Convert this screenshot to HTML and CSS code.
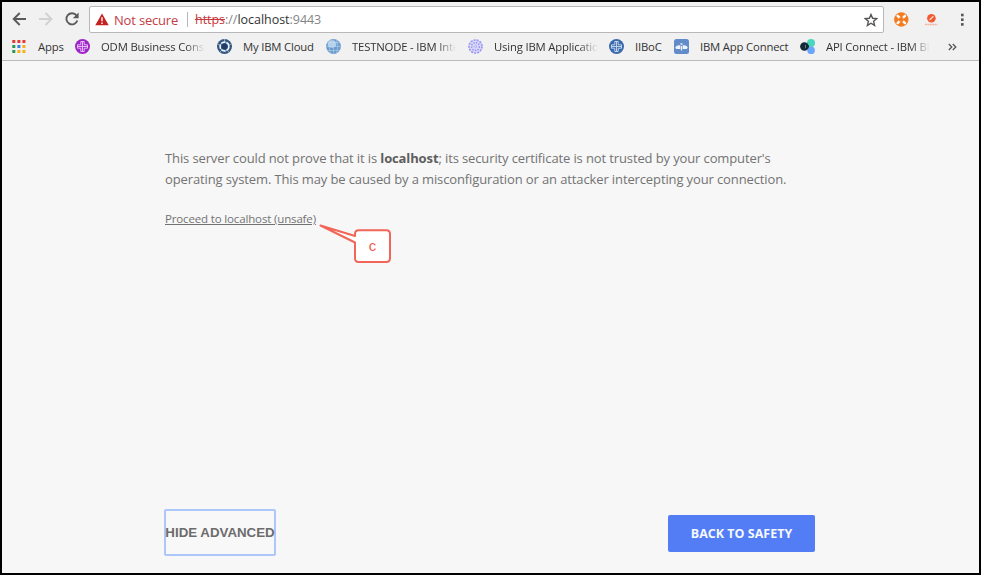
FILE: index.html
```
<!DOCTYPE html>
<html lang="en">
<head>
<meta charset="utf-8">
<title>Privacy error</title>
<link rel="stylesheet" href="styles.css">
</head>
<body>
<div class="window">
  <header class="chrome">
    <div class="toolbar">
      <svg class="nav" width="80" height="28" viewBox="0 0 80 28" fill="none" stroke-width="1.9">
        <path d="M24 14H12M17.7 8L11.7 14L17.7 20" stroke="#5a5a5a"/>
        <path d="M37 14H49M43.5 8L49.5 14L43.5 20" stroke="#d2d2d2"/>
        <path d="M74.5 10.5A5.6 5.6 0 1 0 75.3 15.5" stroke="#5a5a5a"/>
        <path d="M76.6 7.5V13.3H70.8Z" fill="#5a5a5a"/>
      </svg>
      <div class="address">
        <svg class="warning" width="14" height="13" viewBox="0 0 14 13"><path d="M7 .5L13.7 12.2H.3Z" fill="#c5221f"/><path d="M7 4.2V8.3M7 9.4V11" stroke="#fff" stroke-width="1.4"/></svg>
        <span class="insecure">Not secure</span>
        <span class="divider"></span>
        <span class="url"><s>https</s>://<b>localhost</b>:9443</span>
        <svg class="star" width="14" height="14" viewBox="0 0 14 14" fill="none" stroke="#555" stroke-width="1.4"><path d="M7 1.5L8.6 5.3L12.8 5.6L9.6 8.3L10.6 12.4L7 10.2L3.4 12.4L4.4 8.3L1.2 5.6L5.4 5.3Z"/></svg>
      </div>
      <svg class="extensions" width="94" height="28" viewBox="0 0 94 28">
        <circle cx="17.3" cy="13.5" r="7.2" fill="#f47b20"/>
        <path d="M13.6 9.8L21 17.2M21 9.8L13.6 17.2" stroke="#fff" stroke-width="2.4" stroke-linecap="round"/><circle cx="17.3" cy="13.5" r="2.5" fill="#f47b20"/>
        <circle cx="47.4" cy="12.3" r="4.3" fill="#f15a31"/><path d="M45.5 14L49.4 10.2" stroke="#ffd9cb" stroke-width="1.2"/><path d="M41 18.5H53.5" stroke="#f4b5a7" stroke-width="1.5" stroke-dasharray="2 .4"/>
        <g fill="#555"><rect x="77" y="7.7" width="2.6" height="2.6"/><rect x="77" y="12.4" width="2.6" height="2.6"/><rect x="77" y="17.1" width="2.6" height="2.6"/></g>
      </svg>
    </div>
    <nav class="bookmarks">
      <a class="mark apps"><svg viewBox="0 0 15 15"><g fill="#e23b34"><path d="M.3 1h3v3h-3zM5.4 1h3v3h-3zM10.4 1h3v3h-3z"/></g><g fill="#249b50"><path d="M.3 6h3v3h-3zM.3 11h3v3h-3z"/></g><path d="M5.4 6h3v3h-3z" fill="#3e7be8"/><path d="M10.4 6h3v3h-3zM5.4 11h3v3h-3zM10.4 11h3v3h-3z" fill="#f6b11a"/></svg><span>Apps</span></a>
      <a class="mark odm"><svg viewBox="0 0 15 15"><circle cx="7.5" cy="7.5" r="7.5" fill="#9e25c8"/><path d="M5.8 2.5h3.4v3.3h3.3v3.4H9.2v3.3H5.8V9.2H2.5V5.8h3.3zM7.5 2.5v10M2.5 7.5h10" fill="none" stroke="#edcafa" stroke-width=".9"/></svg><span class="fade">ODM Business Cons<i>o</i></span></a>
      <a class="mark cloud"><svg viewBox="0 0 15 15"><circle cx="7.5" cy="7.5" r="7.5" fill="#345681"/><circle cx="7.5" cy="7.5" r="4.4" fill="none" stroke="#eef5fb" stroke-width="1.6" stroke-dasharray="4.7 .83"/><circle cx="7.5" cy="7.5" r="2.7" fill="#203e68"/><path d="M7.5 0v2.6M.5 5l2.5 1M14.5 5l-2.5 1M3 13.5l1.5-2.2M12 13.5l-1.5-2.2" stroke="#b6c9dc" stroke-width=".7"/></svg><span>My IBM Cloud</span></a>
      <a class="mark testnode"><svg viewBox="0 0 15 15"><circle cx="7.5" cy="7.5" r="7.4" fill="#6c9bce"/><ellipse cx="6" cy="5" rx="4.3" ry="3.8" fill="#b4d1eb"/><path d="M7.5.5v14M.5 7.5h14M2 3.5h11M2 11.5h11M4.5 1q-3 6.5 0 13M10.5 1q3 6.5 0 13" fill="none" stroke="#c2daf0" stroke-width=".5"/></svg><span class="fade">TESTNODE - IBM Int<i>e</i></span></a>
      <a class="mark using"><svg viewBox="0 0 15 15" fill="none" stroke="#9b98f2"><circle cx="7.5" cy="7.5" r="7" fill="#dcdcf8" stroke="none"/><circle cx="7.5" cy="7.5" r="6.5" stroke-width="1.7" stroke-dasharray="2 1.1"/><circle cx="7.5" cy="7.5" r="3.9" stroke-width="1.6" stroke-dasharray="1.5 1.1"/><circle cx="7.5" cy="7.5" r="1.3" stroke-dasharray="1 .6"/></svg><span class="fade">Using IBM Applicati<i>o</i></span></a>
      <a class="mark iiboc"><svg viewBox="0 0 15 15"><circle cx="7.5" cy="7.5" r="7.5" fill="#3b6aaa"/><path d="M5.8 2.5h3.4v3.3h3.3v3.4H9.2v3.3H5.8V9.2H2.5V5.8h3.3zM7.5 2.5v10M2.5 7.5h10" fill="none" stroke="#c9ddf2" stroke-width=".9"/></svg><span>IIBoC</span></a>
      <a class="mark connect"><svg viewBox="0 0 15 15"><rect width="15" height="15" rx="2.5" fill="#628bc9"/><path d="M1.3 8.2Q2.7 5.7 6.3 6.3V10H2.5Q1.3 9.5 1.3 8.2ZM13.7 8.2Q12.3 5.7 8.7 6.3V10H12.5Q13.7 9.5 13.7 8.2ZM6.5 4.2h2v1.5h-2zM6.9 7h1.2v4.5H6.9z" fill="#edf4fd"/></svg><span>IBM App Connect</span></a>
      <a class="mark api"><svg viewBox="0 0 15 15"><circle cx="11" cy="4" r="4" fill="#4ad5bd"/><circle cx="11.1" cy="11.4" r="3.8" fill="#69a5fb"/><path d="M6 5L11 3V7L7.5 9Z" fill="#4ad5bd"/><circle cx="4.4" cy="7.5" r="4.3" fill="#142937"/><path d="M7.2 5.5Q11 7 7.2 9.7Z" fill="#142937"/><path d="M5.5 5.8v3.4" stroke="#7d8f98" stroke-width=".8"/></svg><span class="fade">API Connect - IBM B<i>l</i></span></a>
      <svg class="overflow" width="9" height="8" viewBox="0 0 9 8" fill="none" stroke="#555" stroke-width="1.3"><path d="M.8 1L3.8 4L.8 7M4.8 1L7.8 4L4.8 7"/></svg>
    </nav>
  </header>
  <main class="page">
    <p class="message"><span class="line">This server could not prove that it is <strong>localhost</strong>; its security certificate is not trusted by your computer's</span><span class="line">operating system. This may be caused by a misconfiguration or an attacker intercepting your connection.</span></p>
    <div class="proceed">
      <a>Proceed to localhost (unsafe)</a>
      <div class="callout"><svg width="74" height="40" viewBox="0 0 74 40"><path d="M1.5 2.5L36 13V11Q36 7.3 39.7 7.3H67.3Q71 7.3 71 11V35.3Q71 39 67.3 39H39.7Q36 39 36 35.3V19.5Z" fill="#fff" stroke="#f16658" stroke-width="2" stroke-linejoin="round"/></svg><span>c</span></div>
    </div>
    <div class="actions"><button class="hide"><span>HIDE ADVANCED</span></button><button class="safe"><span>BACK TO SAFETY</span></button></div>
  </main>
</div>
</body>
</html>
```
FILE: styles.css
```
* { box-sizing: border-box; }
body { margin: 0; font-family: "Open Sans", "Noto Sans", sans-serif; }
.window { width: 981px; height: 575px; border: 2px solid #000; background: #f7f7f7; display: flex; flex-direction: column; overflow: hidden; }
.chrome { height: 59px; flex: none; background: #f1f1f1; border-bottom: 1px solid #b9b9b9; }
.toolbar { height: 32px; padding-top: 4px; display: flex; }
.nav { margin-right: 7px; flex: none; margin-top: -1px; }
.address { width: 795px; height: 27px; flex: none; display: flex; align-items: center; background: #fff; border: 1px solid #b8b8b8; border-radius: 2px; padding: 0 5px; font-size: 13px; white-space: nowrap; }
.warning { margin-right: 5px; }
.insecure { width: 64px; color: #c43c45; letter-spacing: -.18px; }
.divider { width: 1px; height: 15px; background: #b7b7b7; margin: 0 7px 0 9px; }
.url { color: #858585; font-size: 12.5px; letter-spacing: -.03px; }
.url s { color: #c5383c; }
.url b { color: #333; font-weight: 400; }
.star { margin-left: auto; }
.extensions { flex: none; }
.bookmarks { display: flex; height: 25px; padding-left: 10px; align-items: center; font-size: 11.3px; letter-spacing: -.17px; color: #333; white-space: nowrap; }
.mark { display: flex; align-items: center; gap: 11px; flex: none; }
.mark svg { width: 15px; height: 15px; flex: none; }
.mark span { line-height: 20px; }
.fade { width: 106px; mask-image: linear-gradient(to right, #000 80%, transparent 98%); }
.fade i { font-style: normal; }
.apps { width: 63px; }
.odm, .testnode { width: 142px; }
.using { width: 141px; }
.cloud { width: 109px; }
.iiboc { width: 65px; }
.connect { width: 126px; }
.api { width: 148px; }
.page { flex: 1; padding: 87px 164px 17px 163px; display: flex; flex-direction: column; color: #737373; }
.message { margin: 0; font-size: 13px; line-height: 21px; letter-spacing: -.12px; white-space: nowrap; }
.message strong { color: #5e5e5e; }
.line { display: block; }
.proceed { position: relative; margin-top: 19px; font-size: 11.5px; line-height: 20px; }
.proceed a { text-decoration: underline; letter-spacing: -.15px; }
.callout { position: absolute; left: 154px; top: 14px; width: 74px; height: 40px; }
.callout svg { display: block; }
.callout span { position: absolute; left: 36px; top: 13px; width: 35px; text-align: center; color: #ee6053; font: 15px/20px "Liberation Sans", sans-serif; }
.actions { margin-top: auto; display: flex; align-items: flex-start; justify-content: space-between; }
button { padding: 0; border: 0; font-weight: 700; white-space: nowrap; }
.hide { width: 112px; height: 47px; background: #f8f8f8; color: #6c6c6c; border: 2px solid #adc6fb; border-radius: 2px; font-family: "Liberation Sans", sans-serif; font-size: 13.3px; display: flex; align-items: center; justify-content: center; margin-left: -1px; }
.safe { width: 147px; height: 37px; margin-top: 6px; background: #527df5; color: #f6f8ff; border-radius: 2px; font-family: "Open Sans", sans-serif; font-size: 12.5px; }
```
